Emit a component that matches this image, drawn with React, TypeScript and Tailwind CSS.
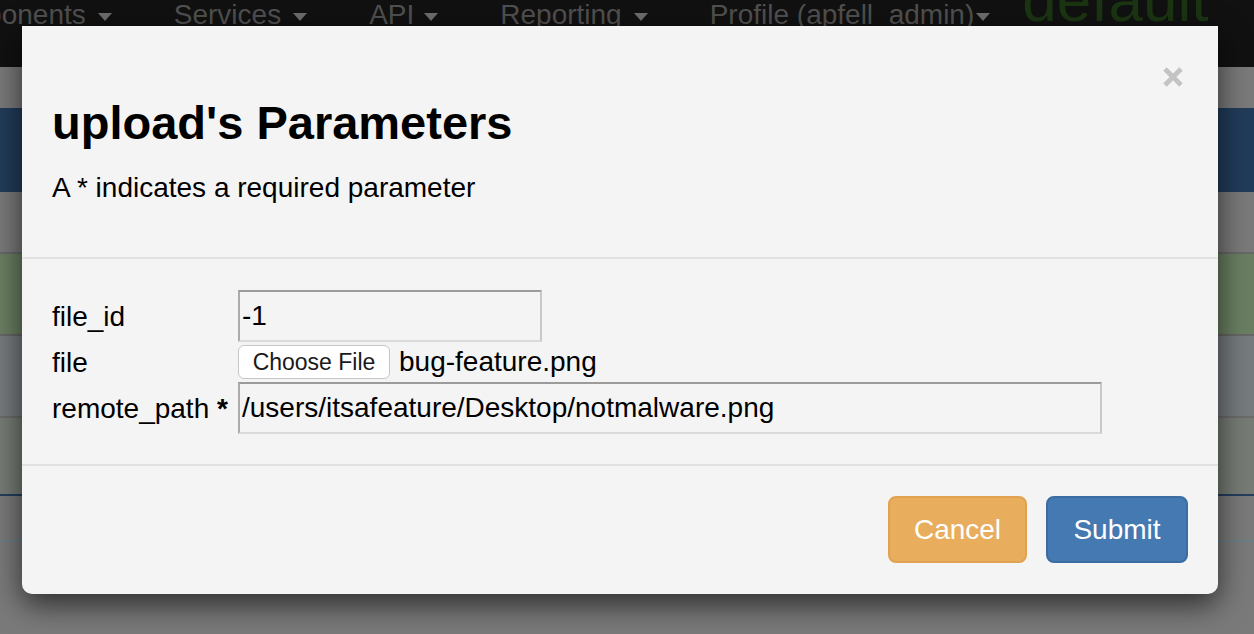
import React from "react";

function Caret({ className }: { className: string }) {
  return (
    <span
      className={`inline-block h-0 w-0 border-l-[7px] border-r-[7px] border-t-[8px] border-l-transparent border-r-transparent border-t-[#6e6e6e] mt-[4px] ${className}`}
    />
  );
}

function NavBar() {
  return (
    <div className="flex h-[67px] shrink-0 items-start overflow-hidden bg-[#111111] text-[28px] leading-[30px] text-[#505050]">
      <div className="ml-[-73px] flex h-[30px] shrink-0 items-center whitespace-nowrap">
        <span>Components</span>
        <Caret className="ml-[12px]" />
      </div>
      <div className="ml-[62px] flex h-[30px] shrink-0 items-center whitespace-nowrap">
        <span>Services</span>
        <Caret className="ml-[12px]" />
      </div>
      <div className="ml-[62px] flex h-[30px] shrink-0 items-center whitespace-nowrap">
        <span>API</span>
        <Caret className="ml-[10px]" />
      </div>
      <div className="ml-[62px] flex h-[30px] shrink-0 items-center whitespace-nowrap">
        <span>Reporting</span>
        <Caret className="ml-[12px]" />
      </div>
      <div className="ml-[62px] flex h-[30px] shrink-0 items-center whitespace-nowrap">
        <span>Profile (apfell_admin)</span>
        <Caret className="ml-[2px]" />
      </div>
      <div className="ml-[32px] mt-[-31px] shrink-0 whitespace-nowrap text-[62px] leading-[62px] text-[#1b3512]">
        default
      </div>
    </div>
  );
}

function Backdrop() {
  return (
    <div className="flex h-full w-full flex-col">
      <NavBar />
      <div className="h-[41px] shrink-0 bg-[#7a7a7a]" />
      <div className="h-[84px] shrink-0 bg-[#213c5a]" />
      <div className="h-[60px] shrink-0 bg-[#7a7a7a]" />
      <div className="h-[2px] shrink-0 bg-[#686868]" />
      <div className="h-[80px] shrink-0 bg-[#6a7f62]" />
      <div className="h-[2px] shrink-0 bg-[#666666]" />
      <div className="h-[80px] shrink-0 bg-[#767b7e]" />
      <div className="h-[2px] shrink-0 bg-[#6b6b6b]" />
      <div className="h-[76px] shrink-0 bg-[#767c75]" />
      <div className="h-[2px] shrink-0 bg-[#243e5c]" />
      <div className="h-[44px] shrink-0 bg-[#7a7a7a]" />
      <div className="h-[2px] shrink-0 bg-[#6b7f89]" />
      <div className="flex-1 bg-[#7a7a7a]" />
    </div>
  );
}

const inputCls =
  "h-[52px] border-2 border-t-[#9b9b9b] border-l-[#ababab] border-r-[#c8c8c8] border-b-[#dadada] bg-[#f4f4f4] pl-[2px] text-[28px] leading-[40px] text-black outline-none";

function Modal() {
  return (
    <div className="absolute left-[22px] top-[26px] flex h-[568px] w-[1196px] flex-col rounded-b-[10px] bg-[#f4f4f4] text-black shadow-[0_10px_30px_rgba(0,0,0,0.65)]">
      {/* header */}
      <div className="flex border-b-2 border-[#e2e2e2] px-[30px] pb-[29px] pt-[30px]">
        <div className="flex flex-col">
          <h3 className="mt-[40px] text-[47px] font-bold leading-[53px]">upload's Parameters</h3>
          <p className="mb-[20px] mt-[19px] text-[28px] leading-[40px]">A * indicates a required parameter</p>
        </div>
        <button className="ml-auto mr-[5px] mt-[11px] h-[20px] w-[20px] self-start">
          <svg width="20" height="20" viewBox="0 0 20 20">
            <path d="M2 2 L18 18 M18 2 L2 18" stroke="#c3c3c3" strokeWidth="4.8" />
          </svg>
        </button>
      </div>
      {/* body */}
      <div className="flex flex-col border-b-2 border-[#e2e2e2] px-[30px] pb-[30px] pt-[31px] text-[28px] leading-[40px]">
        <div className="flex h-[52px] items-center">
          <div className="mt-[2px] w-[186px]">file_id</div>
          <input className={`${inputCls} w-[304px]`} defaultValue="-1" />
        </div>
        <div className="flex h-[40px] items-center">
          <div className="mt-[2px] w-[186px]">file</div>
          <div className="flex items-center">
            <button className="h-[34px] w-[152px] rounded-[6px] border border-[#c6c6c6] bg-white text-[23px] leading-[30px] text-[#1a1a1a]">
              Choose File
            </button>
            <span className="ml-[9px]">bug-feature.png</span>
          </div>
        </div>
        <div className="flex h-[52px] items-center">
          <div className="mt-[2px] w-[186px]">
            remote_path <span className="font-bold">*</span>
          </div>
          <input
            className={`${inputCls} w-[864px]`}
            defaultValue="/users/itsafeature/Desktop/notmalware.png"
          />
        </div>
      </div>
      {/* footer */}
      <div className="flex justify-end gap-[19px] px-[30px] pt-[30px]">
        <button className="h-[67px] w-[139px] rounded-[8px] border-2 border-[#e0a24f] bg-[#e8ae5d] text-[28px] text-white">
          Cancel
        </button>
        <button className="h-[67px] w-[142px] rounded-[8px] border-2 border-[#3b6ca2] bg-[#4479b2] text-[28px] text-white">
          Submit
        </button>
      </div>
    </div>
  );
}

export default function App() {
  return (
    <div className="relative h-[634px] w-[1254px] overflow-hidden bg-[#7a7a7a] font-['Liberation_Sans',Arial,Helvetica,sans-serif]">
      <Backdrop />
      <Modal />
    </div>
  );
}
